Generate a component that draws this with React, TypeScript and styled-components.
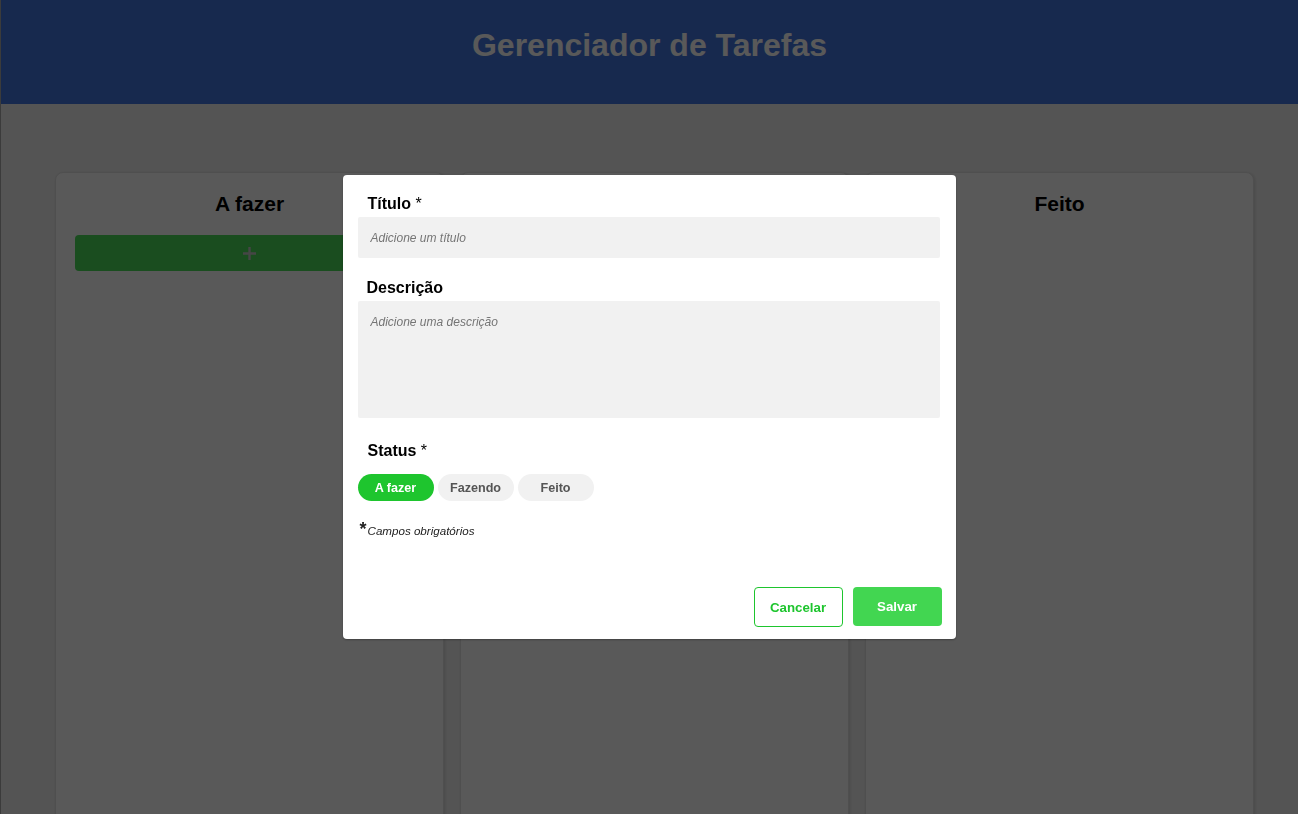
import React from "react";
import styled, { createGlobalStyle } from "styled-components";

const Global = createGlobalStyle`
  html, body { margin: 0; padding: 0; }
  body {
    background: #f0f0f0;
    font-family: "Liberation Sans", Arial, sans-serif;
    overflow: hidden;
  }
  * { box-sizing: border-box; }
`;

const Page = styled.div`
  height: 814px;
  overflow: hidden;
  border-left: 1px solid #aaa;
`;

const Header = styled.header`
  height: 104px;
  background: #4376e0;
  display: flex;
  justify-content: center;
  align-items: center;
  padding-bottom: 14px;
`;

const Title = styled.h1`
  margin: 0;
  color: #fff;
  font-size: 32px;
  font-weight: 700;
`;

const Board = styled.main`
  display: flex;
  gap: 16px;
  padding: 68px 0 0 54px;
`;

const Column = styled.section`
  width: 389px;
  height: 700px;
  background: #fff;
  border-radius: 8px;
  border: 1px solid #e2e2e2;
  box-shadow: 1px 1px 3px rgba(0, 0, 0, 0.12);
  padding: 19px 19px 0;
  display: flex;
  flex-direction: column;
  align-items: stretch;
`;

const ColumnTitle = styled.h2`
  margin: 0 0 19px;
  text-align: center;
  font-size: 21px;
  line-height: 24px;
  font-weight: 700;
  color: #000;
`;

const AddButton = styled.button`
  height: 36px;
  border: none;
  border-radius: 4px;
  background: #4adc59;
  display: flex;
  align-items: center;
  justify-content: center;
  padding: 0;
`;

const Overlay = styled.div`
  position: fixed;
  inset: 0;
  background: rgba(0, 0, 0, 0.65);
  display: flex;
  align-items: center;
  justify-content: center;
`;

const Modal = styled.div`
  width: 613px;
  height: 464px;
  background: #fff;
  border-radius: 4px;
  box-shadow: 0 1px 2px rgba(0, 0, 0, 0.3);
  padding: 20px 14px 12px 15px;
  display: flex;
  flex-direction: column;
`;

const Label = styled.label<{ $top?: number; $left?: number }>`
  display: block;
  margin: ${(p) => p.$top ?? 0}px 0 4px ${(p) => p.$left ?? 10}px;
  font-size: 16px;
  line-height: 18px;
  font-weight: 700;
  color: #000;
`;

const Req = styled.span`
  font-weight: 400;
`;

const Field = styled.div<{ $h: number }>`
  width: 582px;
  height: ${(p) => p.$h}px;
  background: #f1f1f1;
  border-radius: 2px;
  padding: ${(p) => (p.$h > 60 ? "14px" : "0")} 13px;
  display: flex;
  align-items: ${(p) => (p.$h > 60 ? "flex-start" : "center")};
  font-size: 12px;
  font-style: italic;
  color: #757575;
`;

const Chips = styled.div`
  display: flex;
  gap: 4px;
  margin-top: 10px;
`;

const Chip = styled.button<{ $active?: boolean }>`
  width: 76px;
  height: 27px;
  border: none;
  border-radius: 14px;
  background: ${(p) => (p.$active ? "#1ec52e" : "#f1f1f1")};
  color: ${(p) => (p.$active ? "#fff" : "#555")};
  font-family: "Liberation Sans", Arial, sans-serif;
  font-size: 12.6px;
  font-weight: 700;
  padding: 0;
`;

const Note = styled.p`
  margin: 22px 0 0 2px;
  font-size: 11.6px;
  font-style: italic;
  color: #222;
  display: flex;
  align-items: baseline;
`;

const Star = styled.span`
  font-style: normal;
  font-weight: 700;
  font-size: 18px;
  line-height: 12px;
  margin-right: 1px;
  color: #222;
`;

const Footer = styled.div`
  margin-top: auto;
  display: flex;
  justify-content: flex-end;
  align-items: flex-start;
  gap: 10px;
`;

const Btn = styled.button<{ $primary?: boolean }>`
  width: 89px;
  height: ${(p) => (p.$primary ? 39 : 40)}px;
  border-radius: 4px;
  border: ${(p) => (p.$primary ? "none" : "1px solid #1ec52e")};
  background: ${(p) => (p.$primary ? "#42d651" : "#fff")};
  color: ${(p) => (p.$primary ? "#fff" : "#1ec52e")};
  font-family: "Liberation Sans", Arial, sans-serif;
  font-size: 13.3px;
  font-weight: 700;
  padding: 0;
`;

export default function App() {
  return (
    <>
      <Global />
      <Page>
        <Header>
          <Title>Gerenciador de Tarefas</Title>
        </Header>
        <Board>
          <Column>
            <ColumnTitle>A fazer</ColumnTitle>
            <AddButton aria-label="Adicionar">
              <svg width="15" height="15" viewBox="0 0 15 15">
                <path d="M7.5 1v13M1 7.5h13" stroke="#c8c8c8" strokeWidth="2.4" />
              </svg>
            </AddButton>
          </Column>
          <Column>
            <ColumnTitle>Fazendo</ColumnTitle>
          </Column>
          <Column>
            <ColumnTitle>Feito</ColumnTitle>
          </Column>
        </Board>
        <Overlay>
          <Modal>
            <Label>
              Título <Req>*</Req>
            </Label>
            <Field $h={41}>Adicione um título</Field>
            <Label $top={21} $left={9}>
              Descrição
            </Label>
            <Field $h={117}>Adicione uma descrição</Field>
            <Label $top={24}>
              Status <Req>*</Req>
            </Label>
            <Chips>
              <Chip $active>A fazer</Chip>
              <Chip>Fazendo</Chip>
              <Chip>Feito</Chip>
            </Chips>
            <Note>
              <Star>*</Star>Campos obrigatórios
            </Note>
            <Footer>
              <Btn>Cancelar</Btn>
              <Btn $primary>Salvar</Btn>
            </Footer>
          </Modal>
        </Overlay>
      </Page>
    </>
  );
}
